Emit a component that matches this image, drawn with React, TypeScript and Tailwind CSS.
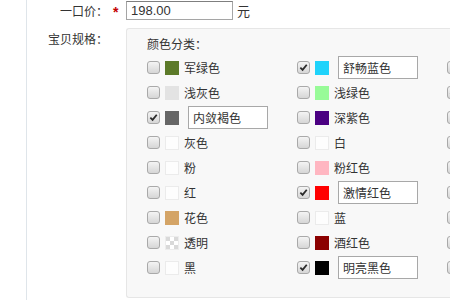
type Item = { name: string; color?: string; checked?: boolean; pattern?: boolean };

const columns: Item[][] = [
  [
    { name: "军绿色", color: "#5c7a29" },
    { name: "浅灰色", color: "#e3e3e3" },
    { name: "内敛褐色", color: "#666666", checked: true },
    { name: "灰色" },
    { name: "粉" },
    { name: "红" },
    { name: "花色", color: "#d4a466" },
    { name: "透明", pattern: true },
    { name: "黑" },
  ],
  [
    { name: "舒畅蓝色", color: "#1fd3fb", checked: true },
    { name: "浅绿色", color: "#98fb98" },
    { name: "深紫色", color: "#4b0082" },
    { name: "白" },
    { name: "粉红色", color: "#ffb6c1" },
    { name: "激情红色", color: "#ff0000", checked: true },
    { name: "蓝" },
    { name: "酒红色", color: "#8b0000" },
    { name: "明亮黑色", color: "#000000", checked: true },
  ],
  [
    { name: "" },
    { name: "", checked: true },
    { name: "" },
    { name: "" },
    { name: "" },
    { name: "" },
    { name: "" },
    { name: "" },
    { name: "" },
  ],
];

function Checkbox({ checked }: { checked?: boolean }) {
  return (
    <span className="flex size-[13px] shrink-0 items-center justify-center rounded-[3px] border border-[#a9a9a9] bg-gradient-to-b from-[#f4f4f4] to-[#d6d6d6]">
      {checked && (
        <svg viewBox="0 0 10 10" className="size-[9px]">
          <path d="M1.5 5.2 L4 7.6 L8.6 2" fill="none" stroke="#2b2b2b" strokeWidth="2" />
        </svg>
      )}
    </span>
  );
}

function Swatch({ item }: { item: Item }) {
  if (item.pattern) {
    return (
      <span className="ml-[5px] grid size-[14px] shrink-0 grid-cols-3 grid-rows-3 border border-[#ececec] bg-white">
        {[0, 1, 2, 3, 4, 5, 6, 7, 8].map((i) => (
          <span key={i} className={i % 2 === 0 ? "bg-[#d9d9d9]" : "bg-white"} />
        ))}
      </span>
    );
  }
  if (!item.color) {
    return <span className="ml-[5px] block size-[14px] shrink-0 border border-[#ebebeb] bg-[#fdfdfd]" />;
  }
  return <span className="ml-[5px] block size-[14px] shrink-0" style={{ backgroundColor: item.color }} />;
}

function ColorRow({ item }: { item: Item }) {
  return (
    <div className="flex h-[25px] items-center whitespace-nowrap">
      <Checkbox checked={item.checked} />
      {item.name && (
        <>
          <Swatch item={item} />
          {item.checked ? (
            <span className="ml-[9px] flex h-[23px] w-[80px] shrink-0 items-center border border-[#a8a8a8] bg-white pl-[4px]">
              {item.name}
            </span>
          ) : (
            <span className="ml-[5px]">{item.name}</span>
          )}
        </>
      )}
    </div>
  );
}

export default function App() {
  return (
    <div className="h-[300px] w-[450px] overflow-hidden bg-white font-['Noto_Sans_CJK_SC',sans-serif] text-[12px] leading-none text-[#333]">
      <div className="ml-[26px] h-full w-[600px] border-l border-[#dfe5ea] pt-[1px]">
        <div className="flex h-[19px] items-center whitespace-nowrap">
          <span className="w-[82px] shrink-0 pr-[1px] text-right">一口价：</span>
          <span className="w-[17px] shrink-0 pl-[4px] pt-[3px] font-['Liberation_Sans',sans-serif] text-[14px] font-bold text-[#c40000]">*</span>
          <span className="flex h-[19px] w-[107px] shrink-0 items-center border border-[#a5a5a5] border-t-[#7f7f7f] pl-[4px] font-['Liberation_Sans',sans-serif] text-[13px]">
            198.00
          </span>
          <span className="ml-[4px] text-[13px]">元</span>
        </div>
        <div className="mt-[8px] flex whitespace-nowrap">
          <span className="mt-[5px] w-[82px] shrink-0 pr-[1px] text-right">宝贝规格：</span>
          <div className="ml-[17px] h-[270px] w-[420px] shrink-0 rounded-l-[3px] border border-r-0 border-[#e6e6e6] bg-[#f8f8f8] pl-[20px] pt-[9px]">
            <div className="h-[13px]">颜色分类：</div>
            <div className="mt-[4px] flex">
              {columns.map((col, ci) => (
                <div key={ci} className="w-[150px] shrink-0">
                  {col.map((item, ri) => (
                    <ColorRow key={ri} item={item} />
                  ))}
                </div>
              ))}
            </div>
          </div>
        </div>
      </div>
    </div>
  );
}
